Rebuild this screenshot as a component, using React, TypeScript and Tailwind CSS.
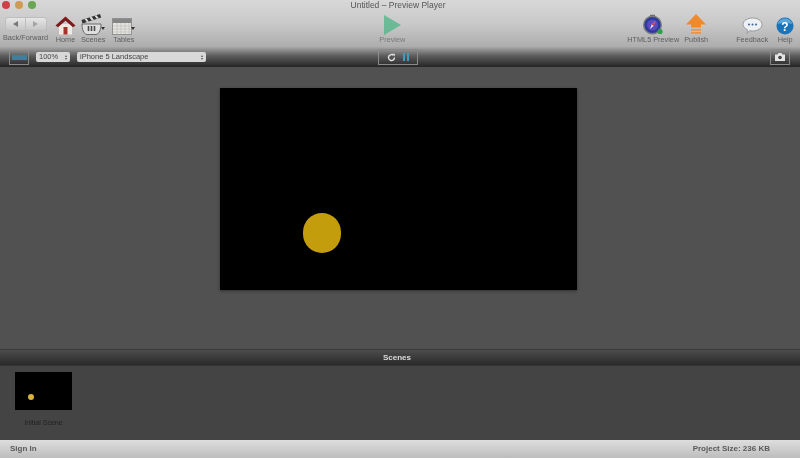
import React from "react";

function Label({ children }: { children: React.ReactNode }) {
  return (
    <span className="text-[7.300px] leading-[8px] mt-[1px] text-[#5f5f5f] whitespace-nowrap">
      {children}
    </span>
  );
}

function HomeIcon() {
  return (
    <svg width="21" height="19" viewBox="0 0 21 19">
      <path d="M4 8h13v10.500H4z" fill="#efe9e2" />
      <path d="M8.500 11h4v7.500h-4z" fill="#a8322c" />
      <path d="M0.500 9.500 10.500 0.500l10 9-2.500 1.800-7.500-6.500-7.500 6.500z" fill="#7c1a1c" />
    </svg>
  );
}

function ScenesIcon() {
  return (
    <svg width="21" height="22" viewBox="0 0 21 22">
      <path d="M0.500 7 19 1l1.200 3.500L1.500 10.500z" fill="#333" />
      <path d="M3.500 6l2-.6 2.300 3-2 .6zM8.500 4.400l2-.6 2.300 3-2 .6zM13.500 2.800l2-.6 2.300 3-2 .6z" fill="#e0e0e0" />
      <path d="M1 11h19c0 5-1.500 10-5 10.500H6C2.500 21 1 16 1 11z" fill="#dedede" stroke="#6a6a6a" strokeWidth="1" />
      <path d="M7.500 13v5M10.500 13v5M13.500 13v5" stroke="#4a4a4a" strokeWidth="1.600" />
    </svg>
  );
}

function TablesIcon() {
  return (
    <svg width="20" height="17" viewBox="0 0 20 17">
      <rect x="0.500" y="0.500" width="19" height="16" fill="#e6e4de" stroke="#909090" />
      <rect x="1" y="1" width="18" height="4" fill="#858585" />
      <path d="M5 5v11M9 5v11M13 5v11M17 5v11M1 8h18M1 11h18M1 14h18" stroke="#bdbdbd" strokeWidth="0.700" />
    </svg>
  );
}

function CompassIcon() {
  return (
    <svg width="20" height="21" viewBox="0 0 20 21">
      <path d="M7 1.500h5" stroke="#666" strokeWidth="1.500" />
      <circle cx="9.500" cy="11" r="8.800" fill="#2c3a9c" stroke="#7d7d7d" strokeWidth="1.400" />
      <circle cx="9.500" cy="11" r="5.500" fill="#5a4ac0" />
      <path d="M12.500 7 10.500 12 7 15l1.700-4.500z" fill="#e8e8f4" />
      <path d="M12.500 7 10.500 12 8.700 10.500z" fill="#d13a3a" />
      <circle cx="17" cy="17.500" r="2.600" fill="#2f9e4c" />
    </svg>
  );
}

function PublishIcon() {
  return (
    <svg width="20" height="21" viewBox="0 0 20 21">
      <path d="M10 0 20 10.500h-5V13.500H5v-3H0z" fill="#ee8a2c" />
      <path d="M5 15h10v1.800H5zM5 18h10v1.800H5z" fill="#e8954a" />
    </svg>
  );
}

function FeedbackIcon() {
  return (
    <svg width="21" height="18" viewBox="0 0 21 18">
      <path d="M10.500 1c5 0 9.500 2.600 9.500 6.500S15.500 14 10.500 14c-1 0-2-.1-3-.4L5 16.500l.5-3.700C2.800 11.500 1 9.400 1 7.500 1 3.600 5.500 1 10.500 1z" fill="#eef1f4" stroke="#9a9a9a" />
      <circle cx="7" cy="7.500" r="1" fill="#3a5f92" />
      <circle cx="10.500" cy="7.500" r="1" fill="#3a5f92" />
      <circle cx="14" cy="7.500" r="1" fill="#3a5f92" />
    </svg>
  );
}

function HelpIcon() {
  return (
    <svg width="18" height="18" viewBox="0 0 18 18">
      <circle cx="9" cy="9" r="8.500" fill="#1c74b8" />
      <path d="M1.500 7C3 3 6 1.500 9 1.500S15 3 16.500 7C12 5.500 6 5.500 1.500 7z" fill="#5aa6da" />
      <text x="9" y="13.500" textAnchor="middle" fontSize="12" fontWeight="700" fill="#fff" fontFamily="Liberation Sans, sans-serif">?</text>
    </svg>
  );
}

function ToolItem({ icon, label, className }: { icon: React.ReactNode; label: string; className?: string }) {
  return (
    <div className={"flex flex-col items-center " + (className ?? "")}>
      <div className="h-[22px] flex items-end">{icon}</div>
      <Label>{label}</Label>
    </div>
  );
}

function Caret() {
  return <span className="self-end mb-[5px] -ml-[1px] w-0 h-0 border-x-[2.500px] border-x-transparent border-t-[3px] border-t-[#333]" />;
}

function Stepper() {
  return (
    <span className="flex flex-col gap-[1px] items-center">
      <span className="w-0 h-0 border-x-[1.500px] border-x-transparent border-b-[2px] border-b-[#555]" />
      <span className="w-0 h-0 border-x-[1.500px] border-x-transparent border-t-[2px] border-t-[#555]" />
    </span>
  );
}

export default function App() {
  return (
    <div className="w-[800px] h-[458px] flex flex-col overflow-hidden font-['Liberation_Sans',sans-serif] bg-[#4f4f4f] blur-[0.4px]">
      {/* toolbar */}
      <div className="h-[47px] shrink-0 relative bg-gradient-to-b from-[#d8d8d8] via-[#c9c9c9] to-[#adadad]">
        <div className="absolute left-[2px] top-[1px] flex gap-[5px]">
          <span className="w-[8px] h-[8px] rounded-full bg-[#cf3f48]" />
          <span className="w-[8px] h-[8px] rounded-full bg-[#d09a55]" />
          <span className="w-[8px] h-[8px] rounded-full bg-[#6aa650]" />
        </div>
        <div className="h-[9px] flex items-center justify-center text-[8.500px] text-[#555] pt-[1px] pr-[4px]">
          Untitled – Preview Player
        </div>
        <div className="flex items-start mt-[4px] h-[32px]">
          <div className="flex flex-col items-center gap-[2px] w-[47px] ml-[2px]">
            <div className="flex w-[42px] h-[14px] mt-[4px] rounded-[3px] border border-[#bdbdbd] bg-gradient-to-b from-[#e6e6e6] to-[#c6c6c6]">
              <span className="flex-1 flex items-center justify-center border-r border-[#bdbdbd]">
                <span className="w-0 h-0 border-y-[3px] border-y-transparent border-r-[5px] border-r-[#777]" />
              </span>
              <span className="flex-1 flex items-center justify-center">
                <span className="w-0 h-0 border-y-[3px] border-y-transparent border-l-[5px] border-l-[#a5a5a5]" />
              </span>
            </div>
            <Label>Back/Forward</Label>
          </div>
          <ToolItem className="ml-[6px]" icon={<HomeIcon />} label="Home" />
          <ToolItem className="ml-[5px]" icon={<span className="flex"><ScenesIcon /><Caret /></span>} label="Scenes" />
          <ToolItem className="ml-[7px]" icon={<span className="flex"><TablesIcon /><Caret /></span>} label="Tables" />
          <ToolItem className="ml-[244px] opacity-70" icon={<svg width="19" height="20" viewBox="0 0 19 20"><path d="M1 0 18 10 1 20z" fill="#45b583" /></svg>} label="Preview" />
          <ToolItem className="ml-[222px]" icon={<CompassIcon />} label="HTML5 Preview" />
          <ToolItem className="ml-[5px]" icon={<PublishIcon />} label="Publish" />
          <ToolItem className="ml-[28px]" icon={<FeedbackIcon />} label="Feedback" />
          <ToolItem className="ml-[8px]" icon={<HelpIcon />} label="Help" />
        </div>
      </div>

      {/* player controls */}
      <div className="h-[20px] shrink-0 flex items-center px-[9px] bg-gradient-to-b from-[#a8a8a8] via-[#5c5c5c] via-45% to-[#262626]">
        <div className="w-[20px] h-[15px] border border-[#8a8a8a] flex items-center justify-center">
          <span className="w-[15px] h-[5px] bg-[#3f7f9c]" />
        </div>
        <div className="ml-[7px] w-[34px] h-[10px] rounded-[2px] bg-[#d8d8d8] flex items-center justify-between px-[3px] text-[7.500px] leading-[10px] text-[#444]">
          100%<Stepper />
        </div>
        <div className="ml-[7px] w-[129px] h-[10px] rounded-[2px] bg-[#d8d8d8] flex items-center justify-between px-[3px] text-[7.500px] leading-[10px] text-[#444]">
          iPhone 5 Landscape<Stepper />
        </div>
        <div className="ml-[172px] w-[40px] h-[16px] border border-[#8a8a8a] flex items-center justify-center gap-[7px]">
          <svg width="9" height="9" viewBox="0 0 9 9">
            <path d="M7.500 4.500a3 3 0 1 1-1-2.200" fill="none" stroke="#e4e4e4" strokeWidth="1.400" />
            <path d="M5.500 0.500 8 1 7.500 3.500z" fill="#e4e4e4" />
          </svg>
          <span className="flex gap-[1.500px]">
            <span className="w-[2.500px] h-[8px] bg-[#3e9cc4]" />
            <span className="w-[2.500px] h-[8px] bg-[#3e9cc4]" />
          </span>
        </div>
        <div className="ml-auto mr-[1px] w-[20px] h-[16px] border border-[#8a8a8a] flex items-center justify-center">
          <svg width="10" height="8" viewBox="0 0 10 8">
            <path d="M0 1.500h2.500L3.500 0h3l1 1.500H10V8H0z" fill="#e4e4e4" />
            <circle cx="5" cy="4.500" r="1.800" fill="#444" />
          </svg>
        </div>
      </div>

      {/* stage */}
      <div className="h-[282px] shrink-0 flex justify-center bg-[#515151] pt-[21px]">
        <div className="relative w-[357px] h-[202px] bg-black -ml-[3px] shadow-[0_1px_3px_rgba(0,0,0,0.4)]">
          <div className="absolute left-[83px] top-[125px] w-[38px] h-[40px] rounded-full bg-[#c49d0c]" />
        </div>
      </div>

      {/* scenes header */}
      <div className="h-[16px] shrink-0 flex items-center justify-center pr-[6px] text-[8px] font-bold text-[#dcdcdc] bg-gradient-to-b from-[#4c4c4c] to-[#2a2a2a] border-t border-[#3a3a3a]">
        Scenes
      </div>

      {/* scenes list */}
      <div className="flex-1 bg-[#444444] border-t border-[#343434] pl-[15px] pt-[6px]">
        <div className="flex flex-col items-center w-[57px] gap-[9px]">
          <div className="relative w-[57px] h-[38px] bg-black">
            <div className="absolute left-[13px] top-[22px] w-[6px] h-[6px] rounded-full bg-[#d8b23e]" />
          </div>
          <span className="text-[7px] leading-[8px] text-[#222] whitespace-nowrap">Initial Scene</span>
        </div>
      </div>

      {/* status bar */}
      <div className="h-[18px] shrink-0 flex items-center justify-between pl-[10px] pr-[30px] bg-gradient-to-b from-[#dedede] to-[#bdbdbd] text-[8px] font-bold text-[#5a5a5a]">
        <span>Sign In</span>
        <span>Project Size: 236 KB</span>
      </div>
    </div>
  );
}
